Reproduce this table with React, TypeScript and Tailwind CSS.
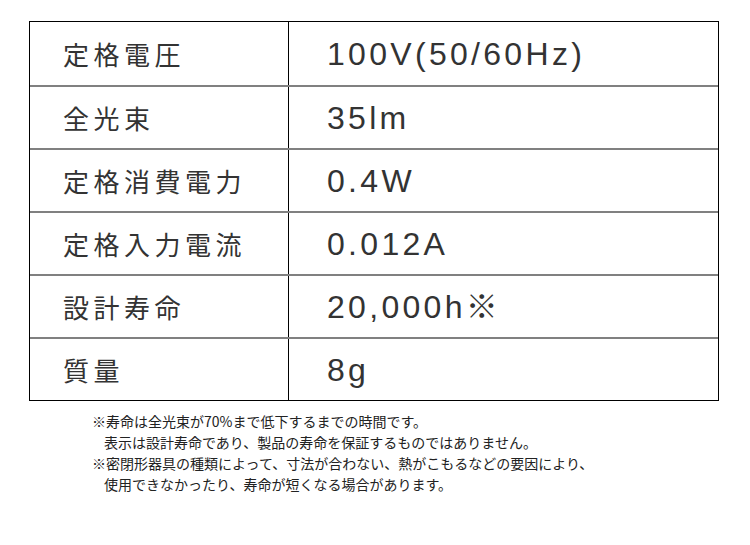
const rows: [string, string][] = [
  ["定格電圧", "100V(50/60Hz)"],
  ["全光束", "35lm"],
  ["定格消費電力", "0.4W"],
  ["定格入力電流", "0.012A"],
  ["設計寿命", "20,000h※"],
  ["質量", "8g"],
];

export default function App() {
  return (
    <div className="h-[545px] w-[750px] bg-white pt-[21px] pl-[29px] text-[#333]">
      <div className="w-[690px] border-[1.5px] border-black">
        {rows.map(([label, value], i) => (
          <div
            key={label}
            className={`flex h-[63px] ${i > 0 ? "border-t-2 border-[#808080]" : ""}`}
          >
            <div className="flex w-[259px] items-center border-r-[1.5px] border-black pl-[33px] font-['Noto_Sans_CJK_JP',sans-serif] text-[26px] tracking-[4.5px]">
              {label}
            </div>
            <div className="flex flex-1 items-center pl-[38px] font-['Liberation_Sans','Noto_Sans_CJK_JP',sans-serif] text-[32px] tracking-[3.3px]">
              {value}
            </div>
          </div>
        ))}
      </div>

      <div className="mt-[10px] pl-[63px] font-['Noto_Sans_CJK_JP',sans-serif] text-[14px] leading-[21px] text-[#222]">
        <p>※寿命は全光束が70%まで低下するまでの時間です。</p>
        <p className="pl-[12px]">表示は設計寿命であり、製品の寿命を保証するものではありません。</p>
        <p>※密閉形器具の種類によって、寸法が合わない、熱がこもるなどの要因により、</p>
        <p className="pl-[12px]">使用できなかったり、寿命が短くなる場合があります。</p>
      </div>
    </div>
  );
}
